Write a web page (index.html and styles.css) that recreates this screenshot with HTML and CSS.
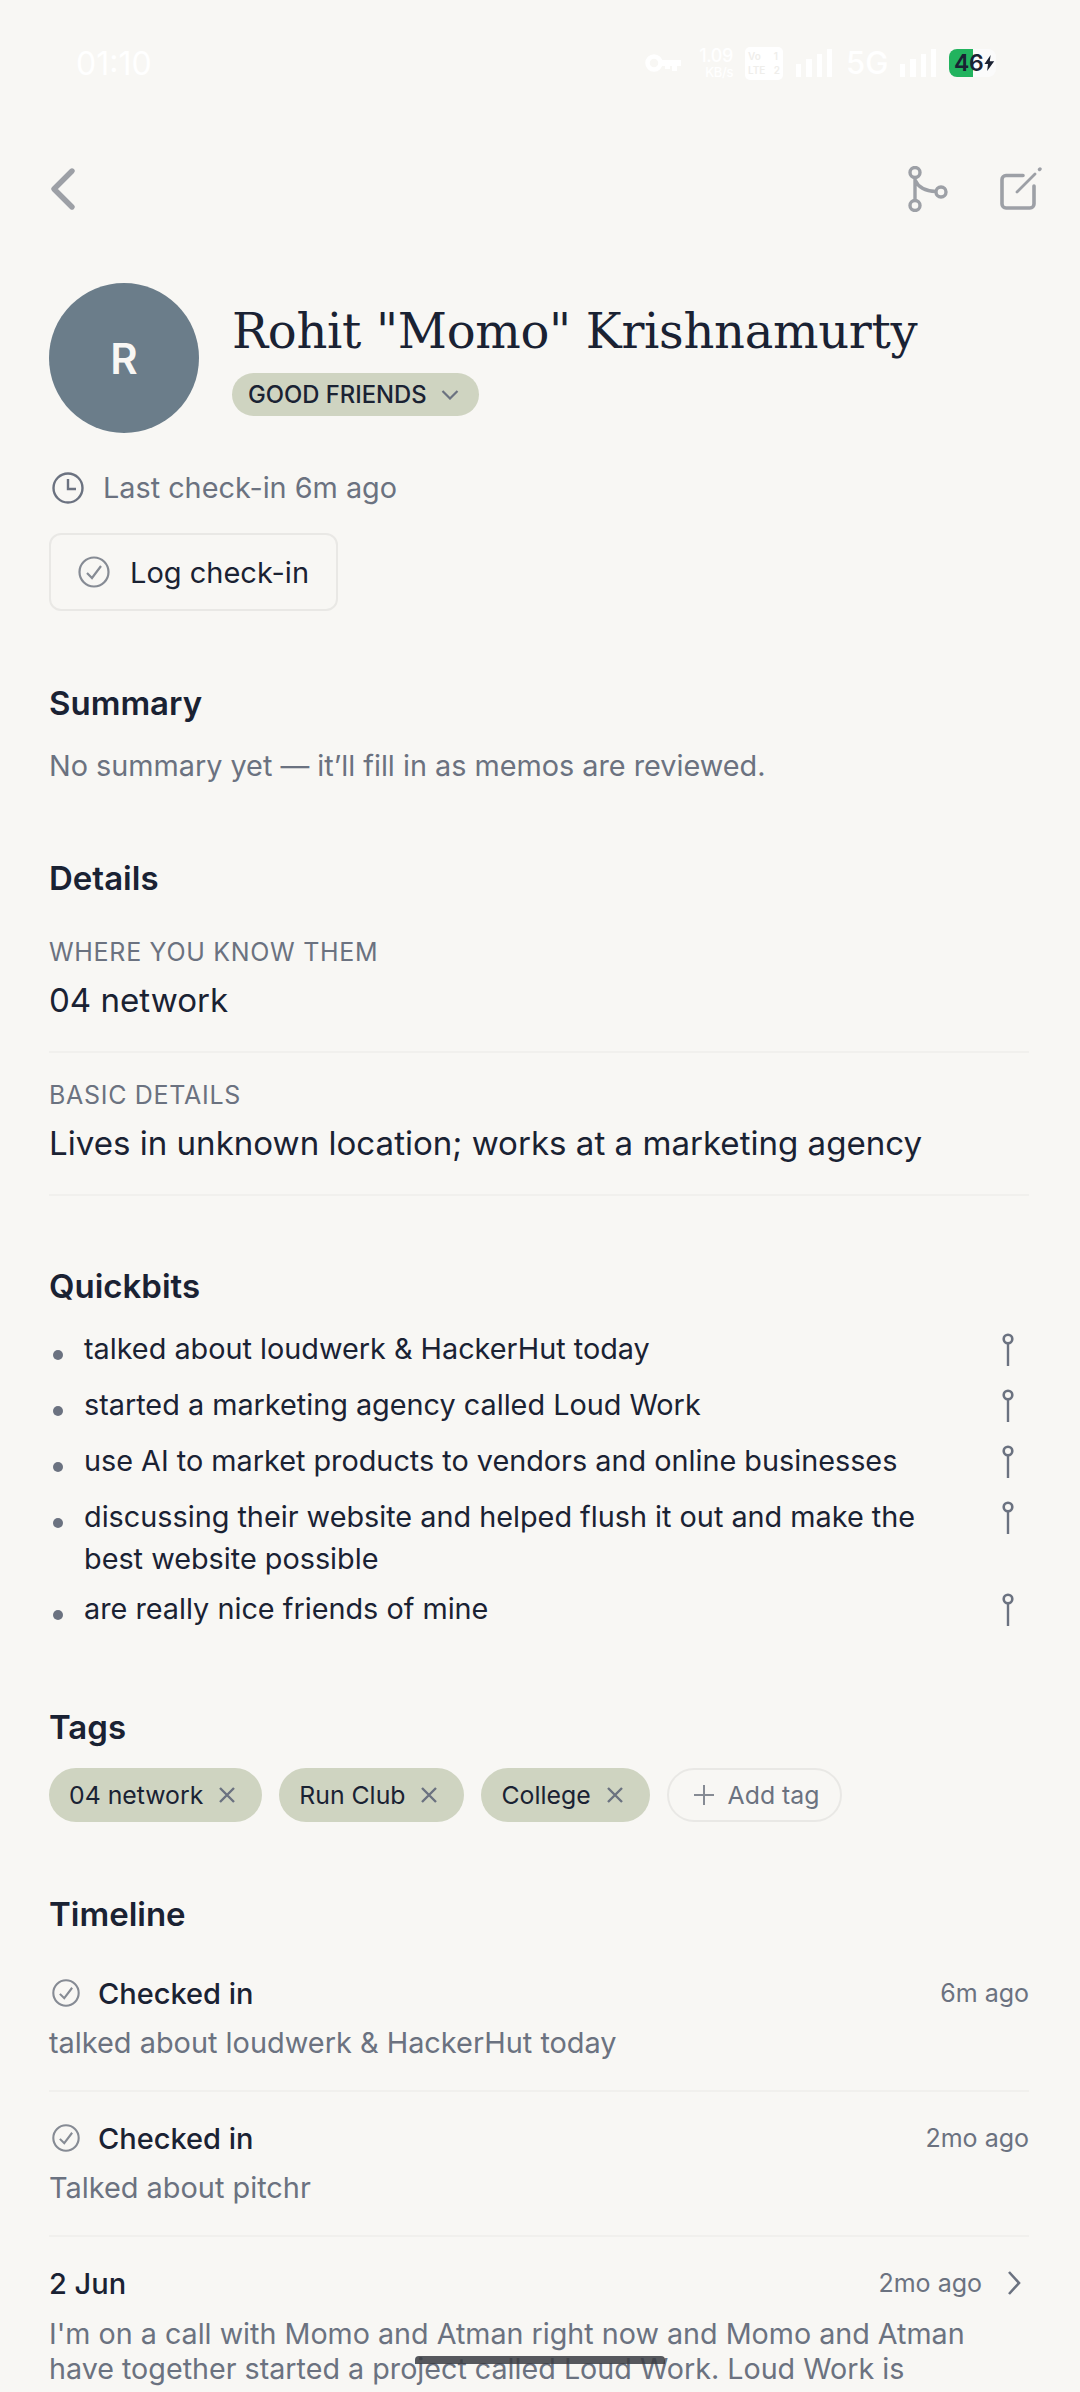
FILE: index.html
```html
<!DOCTYPE html>
<html lang="en">
<head>
<meta charset="utf-8">
<title>Rohit "Momo" Krishnamurty</title>
<link rel="stylesheet" href="styles.css">
</head>
<body>
<div class="screen">
  <div class="status">
    <span class="time">01:10</span>
    <div class="status-right">
      <svg class="st-key" width="37" height="20" viewBox="0 0 37 20"><circle cx="9" cy="10" r="6.500" fill="none" stroke="#fff" stroke-width="4.500"/><path d="M15 7h21v6h-4v5h-5v-5h-2v3h-5v-3h-5z" fill="#fff"/></svg>
      <div class="st-speed"><span>1.09</span><span class="st-unit">KB/s</span></div>
      <div class="st-volte"><span>Vo</span><span>1</span><span>LTE</span><span>2</span></div>
      <svg class="st-bars" width="36" height="28" viewBox="0 0 36 28"><path d="M0 15h5v13H0zM10 10h6v18h-6zM21 5h5v23h-5zM31 0h5v28h-5z" fill="#fff"/></svg>
      <span class="st-5g">5G</span>
      <svg class="st-bars2" width="36" height="28" viewBox="0 0 36 28"><path d="M0 15h5v13H0zM10 10h6v18h-6zM21 5h5v23h-5zM31 0h5v28h-5z" fill="#fff"/></svg>
      <div class="st-batt"><div class="st-fill"></div><span class="st-pct">46</span><svg class="st-bolt" width="12" height="16" viewBox="0 0 12 18"><path d="M7 0 0 10h4l-1 8 8-11H6z" fill="#1a2233"/></svg></div>
    </div>
  </div>

  <div class="topbar">
    <svg class="ic-back" width="30" height="44" viewBox="0 0 30 44"><path d="M26 4 8 22l18 18" fill="none" stroke="#9da0a6" stroke-width="5.400" stroke-linecap="round" stroke-linejoin="round"/></svg>
    <div class="top-actions">
      <svg width="40" height="46" viewBox="0 0 40 46"><g fill="none" stroke="#9da0a6" stroke-width="3.400"><circle cx="7" cy="6.500" r="5"/><circle cx="7" cy="39.500" r="5"/><circle cx="33" cy="26" r="5"/><path d="M7 11.500v23M7 14c3 7 10 11 21 11.500"/></g></svg>
      <svg width="44" height="44" viewBox="0 0 44 44"><g fill="none" stroke="#9da0a6" stroke-linecap="round"><path d="M24 8.500H7a4 4 0 0 0-4 4V37a4 4 0 0 0 4 4h24a4 4 0 0 0 4-4V19" stroke-width="3.600"/><path d="M18 25 36 7" stroke-width="2.800"/><path d="M40.500 2.500l.5-.5" stroke-width="3.400"/></g></svg>
    </div>
  </div>

  <main class="content">
    <section class="hero">
      <div class="avatar">R</div>
      <div class="hero-text">
        <h1 class="name">Rohit "Momo" Krishnamurty</h1>
        <div class="level">GOOD FRIENDS
          <svg width="18" height="10" viewBox="0 0 18 10"><path d="M1.500 1 9 8.500 16.500 1" fill="none" stroke="#6b7280" stroke-width="2.200"/></svg>
        </div>
      </div>
    </section>

    <div class="last">
      <svg width="32" height="32" viewBox="0 0 32 32"><g fill="none" stroke="#6b7280" stroke-width="2.400"><circle cx="16" cy="16" r="14.500"/><path d="M16 7v10h8"/></g></svg>
      <span>Last check-in 6m ago</span>
    </div>

    <div class="log-btn">
      <svg class="check" width="32" height="32" viewBox="0 0 32 32"><g fill="none" stroke="#868b94" stroke-width="2.200"><circle cx="16" cy="16" r="14.500"/><path d="m9 17 5 5 9-12"/></g></svg>
      <span>Log check-in</span>
    </div>

    <section class="sec sec-summary">
      <h2>Summary</h2>
      <p class="muted summary">No summary yet — it’ll fill in as memos are reviewed.</p>
    </section>

    <section class="sec sec-details">
      <h2>Details</h2>
      <div class="field first">
        <div class="label">WHERE YOU KNOW THEM</div>
        <div class="value">04 network</div>
      </div>
      <div class="field">
        <div class="label">BASIC DETAILS</div>
        <div class="value">Lives in unknown location; works at a marketing agency</div>
      </div>
    </section>

    <section class="sec sec-quick">
      <h2>Quickbits</h2>
      <ul class="bits">
        <li><span>talked about loudwerk &amp; HackerHut today</span><svg class="pin" width="12" height="34" viewBox="0 0 12 34"><g fill="none" stroke="#6b7280"><circle cx="6" cy="6" r="4.300" stroke-width="2.600"/><path d="M6 10v23" stroke-width="2.400"/></g></svg></li>
        <li><span>started a marketing agency called Loud Work</span><svg class="pin" width="12" height="34" viewBox="0 0 12 34"><g fill="none" stroke="#6b7280"><circle cx="6" cy="6" r="4.300" stroke-width="2.600"/><path d="M6 10v23" stroke-width="2.400"/></g></svg></li>
        <li><span>use AI to market products to vendors and online businesses</span><svg class="pin" width="12" height="34" viewBox="0 0 12 34"><g fill="none" stroke="#6b7280"><circle cx="6" cy="6" r="4.300" stroke-width="2.600"/><path d="M6 10v23" stroke-width="2.400"/></g></svg></li>
        <li><span>discussing their website and helped flush it out and make the best website possible</span><svg class="pin" width="12" height="34" viewBox="0 0 12 34"><g fill="none" stroke="#6b7280"><circle cx="6" cy="6" r="4.300" stroke-width="2.600"/><path d="M6 10v23" stroke-width="2.400"/></g></svg></li>
        <li><span>are really nice friends of mine</span><svg class="pin" width="12" height="34" viewBox="0 0 12 34"><g fill="none" stroke="#6b7280"><circle cx="6" cy="6" r="4.300" stroke-width="2.600"/><path d="M6 10v23" stroke-width="2.400"/></g></svg></li>
      </ul>
    </section>

    <section class="sec sec-tags">
      <h2>Tags</h2>
      <div class="tags">
        <div class="tag">04 network<svg width="18" height="18" viewBox="0 0 18 18"><path d="M2 2l14 14M16 2 2 16" stroke="#6b7280" stroke-width="2.400"/></svg></div>
        <div class="tag">Run Club<svg width="18" height="18" viewBox="0 0 18 18"><path d="M2 2l14 14M16 2 2 16" stroke="#6b7280" stroke-width="2.400"/></svg></div>
        <div class="tag">College<svg width="18" height="18" viewBox="0 0 18 18"><path d="M2 2l14 14M16 2 2 16" stroke="#6b7280" stroke-width="2.400"/></svg></div>
        <div class="tag tag-add"><svg width="22" height="22" viewBox="0 0 22 22"><path d="M11 1v20M1 11h20" stroke="#868b94" stroke-width="2"/></svg>Add tag</div>
      </div>
    </section>

    <section class="sec sec-timeline">
      <h2>Timeline</h2>
      <article class="entry first">
        <div class="entry-head">
          <svg class="check" width="28" height="28" viewBox="0 0 32 32"><g fill="none" stroke="#868b94" stroke-width="2.400"><circle cx="16" cy="16" r="14.500"/><path d="m9 17 5 5 9-12"/></g></svg>
          <span class="entry-title">Checked in</span>
          <span class="ago">6m ago</span>
        </div>
        <p class="muted entry-body">talked about loudwerk &amp; HackerHut today</p>
      </article>
      <article class="entry">
        <div class="entry-head">
          <svg class="check" width="28" height="28" viewBox="0 0 32 32"><g fill="none" stroke="#868b94" stroke-width="2.400"><circle cx="16" cy="16" r="14.500"/><path d="m9 17 5 5 9-12"/></g></svg>
          <span class="entry-title">Checked in</span>
          <span class="ago">2mo ago</span>
        </div>
        <p class="muted entry-body">Talked about pitchr</p>
      </article>
      <article class="entry memo">
        <div class="entry-head">
          <span class="entry-title">2 Jun</span>
          <span class="ago">2mo ago</span>
          <svg class="chev" width="16" height="26" viewBox="0 0 16 26"><path d="m3 2 10 11L3 24" fill="none" stroke="#6b7280" stroke-width="2.600"/></svg>
        </div>
        <p class="muted memo-body">I'm on a call with Momo and Atman right now and Momo and Atman have together started a project called Loud Work. Loud Work is</p>
      </article>
    </section>
  </main>

  <div class="home-bar"></div>
</div>
</body>
</html>
```

FILE: styles.css
```css
* { box-sizing: border-box; }
html, body { margin: 0; padding: 0; }
body { background: #f8f7f4; color: #1a2233; font-family: Inter, "Noto Sans", sans-serif; }
h1, h2, p, ul { margin: 0; padding: 0; }

.screen { position: relative; width: 1080px; height: 2392px; overflow: hidden; background: #f8f7f4; }

/* status bar */
.status { height: 126px; display: flex; align-items: center; justify-content: space-between; padding: 0 84px 0 76px; color: #fff; }
.time { margin-top: 2px; font-size: 32px; line-height: 40px; }
.status-right { display: flex; align-items: center; }
.st-speed { display: flex; flex-direction: column; align-items: flex-end; width: 33px; margin-left: 18px; font-size: 18px; line-height: 18px; font-weight: 500; letter-spacing: -0.4px; white-space: nowrap; }
.st-unit { font-size: 13px; line-height: 14px; }
.st-volte { display: grid; grid-template-columns: 1fr auto; align-content: center; width: 38px; height: 33px; margin-left: 12px; padding: 0 3px; background: #fff; border-radius: 5px; color: #efeeeb; font-size: 10px; line-height: 14px; font-weight: 600; }
.st-bars { margin-left: 13px; }
.st-5g { width: 40px; margin-left: 14px; font-size: 31px; line-height: 34px; font-weight: 500; white-space: nowrap; }
.st-bars2 { margin-left: 14px; }
.st-batt { position: relative; width: 47px; height: 28px; margin-left: 13px; padding-left: 5px; border-radius: 8px; background: #fbfbfb; display: flex; align-items: center; overflow: hidden; }
.st-fill { position: absolute; left: 0; top: 0; bottom: 0; width: 24px; background: #22b35e; }
.st-pct { position: relative; font-size: 23px; line-height: 28px; font-weight: 600; color: #1a2233; letter-spacing: -0.3px; }
.st-bolt { position: relative; margin-left: 1px; }

/* top bar */
.topbar { height: 126px; display: flex; align-items: center; justify-content: space-between; padding: 0 37px 0 46px; }
.top-actions { display: flex; align-items: center; gap: 51px; }

.content { padding: 31px 51px 0 49px; }

/* hero */
.hero { display: flex; align-items: flex-start; gap: 33px; }
.avatar { flex: none; width: 150px; height: 150px; border-radius: 50%; background: #6b7d8a; color: #f8f7f4; display: flex; align-items: center; justify-content: center; font-size: 42px; font-weight: 600; }
.hero-text { padding-top: 16px; min-width: 0; }
.name { font-family: "DejaVu Serif", serif; font-size: 48px; line-height: 64px; font-weight: 400; white-space: nowrap; letter-spacing: -0.3px; }
.level { display: inline-flex; align-items: center; gap: 14px; height: 43px; margin-top: 10px; padding: 0 20px 0 16px; border-radius: 22px; background: #cfd4c1; font-size: 23.800px; font-weight: 550; }

.last { display: flex; align-items: center; gap: 19px; margin: 39px 0 0 3px; color: #6b7280; font-size: 28.800px; line-height: 32px; }

.log-btn { display: inline-flex; align-items: center; gap: 20px; height: 78px; margin-top: 29px; padding: 0 27px 0 27px; border: 2px solid #e9e8e5; border-radius: 12px; font-size: 29px; }

/* sections */
.sec h2 { font-size: 33px; line-height: 40px; font-weight: 600; }
.muted { color: #6b7280; }
.sec-summary { margin-top: 72px; }
.summary { margin-top: 25px; font-size: 28.800px; line-height: 36px; }
.sec-details { margin-top: 74px; }
.field { padding: 27px 0 31px; border-bottom: 2px solid #f1f0ed; }
.field.first { padding-top: 39px; }
.label { color: #6b7280; font-size: 25px; line-height: 30px; letter-spacing: 0.7px; }
.value { margin-top: 13px; font-size: 33.100px; line-height: 40px; }
.sec-quick { margin-top: 70px; }
.bits { list-style: none; margin-top: 22px; }
.bits li { position: relative; display: flex; justify-content: space-between; align-items: flex-start; min-height: 48px; margin-bottom: 8px; padding-left: 35px; font-size: 28.800px; line-height: 42px; }
.bits li::before { content: ""; position: absolute; left: 4px; top: 22px; width: 10px; height: 10px; border-radius: 50%; background: #6b7280; }
.bits li span { max-width: 860px; }
.pin { flex: none; margin: 5px 15px 0 0; }

.sec-tags { margin-top: 71px; }
.tags { display: flex; align-items: center; gap: 17px; margin-top: 21px; }
.tag { display: flex; align-items: center; gap: 15px; height: 54px; padding: 0 26px 0 20px; border-radius: 27px; background: #cfd4c1; font-size: 24.800px; }
.tag-add { gap: 13px; padding: 0 21px 0 24px; background: none; border: 2px solid #e9e8e5; color: #6b7280; }

.sec-timeline { margin-top: 72px; }
.entry { padding: 28px 0 29px; border-bottom: 2px solid #f1f0ed; }
.entry.first { padding-top: 41px; }
.entry.memo { border-bottom: 0; }
.entry-head { display: flex; align-items: center; height: 36px; }
.entry-head .check { margin: 0 18px 0 3px; }
.entry-title { flex: 1; font-size: 29px; font-weight: 500; }
.ago { color: #6b7280; font-size: 25px; }
.chev { margin-left: 24px; margin-right: 7px; }
.entry-body { margin-top: 14px; font-size: 28.900px; line-height: 36px; }
.memo-body { margin-top: 15px; font-size: 28.700px; line-height: 35px; }

.home-bar { position: absolute; left: 415px; top: 2356px; width: 250px; height: 8px; border-radius: 4px 4px 0 0; background: rgba(58, 60, 66, 0.85); }
```
